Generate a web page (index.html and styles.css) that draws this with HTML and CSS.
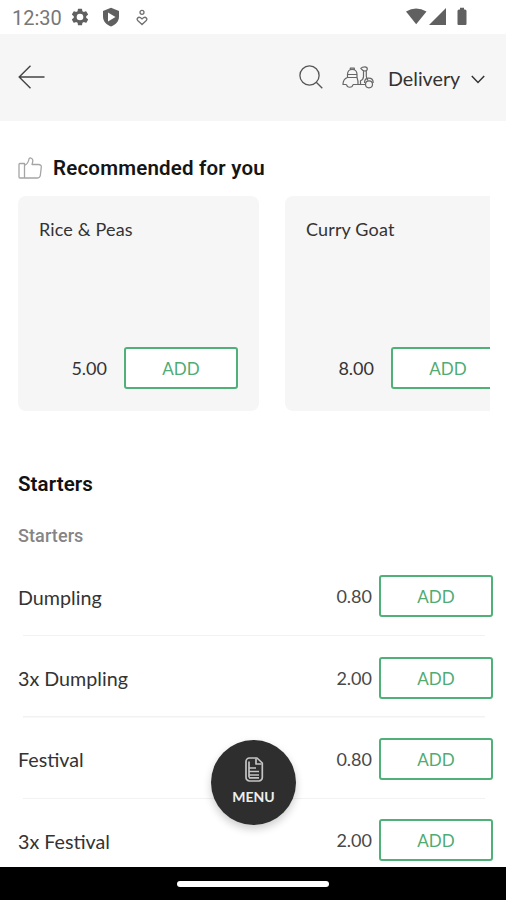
FILE: index.html
```html
<!DOCTYPE html>
<html lang="en">
<head>
<meta charset="utf-8">
<title>Menu</title>
<link rel="stylesheet" href="styles.css">
</head>
<body>
<div class="phone">
  <div class="status">
    <span class="clock">12:30</span>
    <svg class="gear" width="20" height="20" viewBox="0 0 24 24"><path fill="#606060" fill-rule="evenodd" d="M19.4 13a7.500 7.500 0 0 0 0-2l2.100-1.650a.5.5 0 0 0 .12-.64l-2-3.460a.5.5 0 0 0-.6-.22l-2.500 1a7.300 7.300 0 0 0-1.700-.98l-.38-2.650A.5.5 0 0 0 14 2h-4a.5.5 0 0 0-.5.4l-.37 2.650a7.700 7.700 0 0 0-1.700.98l-2.480-1a.5.5 0 0 0-.61.220l-2 3.460a.5.5 0 0 0 .12.640L4.570 11a8 8 0 0 0 0 2l-2.100 1.650a.5.500 0 0 0-.13.640l2 3.460a.5.5 0 0 0 .61.220l2.490-1a7.300 7.300 0 0 0 1.690.98l.38 2.650a.5.500 0 0 0 .49.400h4a.5.500 0 0 0 .49-.4l.38-2.650a7.700 7.700 0 0 0 1.690-.98l2.490 1a.5.500 0 0 0 .61-.22l2-3.460a.5.500 0 0 0-.12-.64zM12 16a4 4 0 1 1 0-8 4 4 0 0 1 0 8z"/></svg>
    <svg class="shield" width="18" height="20" viewBox="0 0 18 20"><path fill="#606060" d="M9 .8 17 4v5.500c0 4.500-3 8.300-8 9.900-5-1.600-8-5.400-8-9.900V4z"/><path fill="#fff" d="M6 5.500 13.500 10 6 14.500z"/></svg>
    <svg class="heart" width="12" height="17" viewBox="0 0 12 17" fill="none" stroke="#707070" stroke-width="1.300"><circle cx="6" cy="3.300" r="2"/><path d="M6 15.500 1.700 11.500C.2 9.700 2.300 7.500 4.300 8.600L6 10l1.700-1.400c2-1.100 4.100 1.100 2.600 2.900z"/></svg>
    <svg class="signals" width="64" height="20" viewBox="0 0 64 20" fill="#606060"><path d="M1 4.500Q11-1.500 21.500 4.500L11.200 17.200z"/><path d="M41 1v17H24z"/><path d="M55 .8h4v1.700h1a1.500 1.500 0 0 1 1.500 1.500v13a1 1 0 0 1-1 1h-7a1 1 0 0 1-1-1V4A1.500 1.500 0 0 1 54 2.500h1z"/></svg>
  </div>
  <header class="bar">
    <svg width="27" height="24" viewBox="0 0 27 24" fill="none" stroke="#444" stroke-width="1.400"><path d="M26.500 12H1.200M12.500.8 1.200 12l11.300 11.200"/></svg>
    <svg class="search" width="24" height="24" viewBox="0 0 24 24" fill="none" stroke="#555" stroke-width="1.300"><circle cx="10.500" cy="10.500" r="9.600"/><path d="m17 17 6.300 6.200"/></svg>
    <svg class="scooter" width="32" height="24" viewBox="0 0 32 24" fill="none" stroke="#666" stroke-width="1.200" stroke-linejoin="round"><path d="M5.500 8.500c0-3.300 1.800-5 4.700-5s4.800 1.700 4.800 5zM8.300 3.500V2.200h4v1.300M5.500 8.500v3h9.500v-3M5.500 11.500C2.500 12.500 1 15 1 18.500h3.500M15 11.500c.8 2 1.300 4.500 1 7h-5"/><path d="M4.500 18.500a3.300 3.300 0 0 0 6.500 0"/><path d="M16 18.500h7.300M18.500 18.500v-3.800c2-.8 3-2 3-4.200V4.800M24.300 4.500v5.500c0 2 .7 3 1.700 4.500M18.800 2.300C20 1 21.300.8 22.800.8c1.500 0 2.500.9 2.500 2.200s-1 2-2.500 2-2.700-.9-4-2.700zM22.500 17c0-3 2-4.800 4.300-4.800 2.700 0 4.400 2 4.400 4.800"/><circle cx="27" cy="18.300" r="3.500"/></svg>
    <span class="mode">Delivery</span>
    <svg class="chev" width="14" height="9" viewBox="0 0 14 9" fill="none" stroke="#333" stroke-width="1.500"><path d="m.8 1 6.200 6.500L13.200 1"/></svg>
  </header>
  <main class="content">
    <h2 class="rec"><svg width="25" height="23" viewBox="0 0 25 23" fill="none" stroke="#a5a5a5" stroke-width="1.300" stroke-linejoin="round"><path d="M6.500 6.500H2A1 1 0 0 0 1 7.500V20a1 1 0 0 0 1 1h4.500zM6.500 8.500C9.500 7 10.500 5 11 2c.3-1.800 3.500-1.200 3.800 1.200.1 1.500-.3 2.800-.8 4.300h6.500c1.900 0 3 1.200 2.800 2.700l-1 8.300c-.3 1.700-1.300 2.500-2.800 2.500H6.500"/></svg>Recommended for you</h2>
    <div class="cards">
      <article class="card"><h3 class="name">Rice &amp; Peas</h3><div class="buy"><span class="price">5.00</span><button class="add">ADD</button></div></article>
      <article class="card"><h3 class="name">Curry Goat</h3><div class="buy"><span class="price">8.00</span><button class="add">ADD</button></div></article>
    </div>
    <h2 class="section">Starters</h2>
    <h3 class="sub">Starters</h3>
    <ul class="list">
      <li class="row"><span class="dish">Dumpling</span><span class="price">0.80</span><button class="add">ADD</button></li>
      <li class="row"><span class="dish">3x Dumpling</span><span class="price">2.00</span><button class="add">ADD</button></li>
      <li class="row"><span class="dish">Festival</span><span class="price">0.80</span><button class="add">ADD</button></li>
      <li class="row"><span class="dish">3x Festival</span><span class="price">2.00</span><button class="add">ADD</button></li>
    </ul>
  </main>
  <nav class="system"><span class="handle"></span></nav>
  <button class="fab"><svg width="20" height="25" viewBox="0 0 20 25" fill="none" stroke="#c4c4c4" stroke-width="1.700" stroke-linejoin="round"><path d="M5.500 1H13l5.300 5v14.500a3.500 3.500 0 0 1-3.500 3.500H5.500A3.500 3.500 0 0 1 2 20.500v-16A3.500 3.500 0 0 1 5.500 1z"/><path d="M12 1.500V7h5.500M5 4.500v16M5 11h7M5 14.500h10M5 18h10M5 20.800h10"/></svg><span class="label">MENU</span></button>
</div>
</body>
</html>
```
FILE: styles.css
```css
* { box-sizing: border-box; }
body { margin: 0; background: #fff; font-family: Lato, sans-serif; color: #333; }
h2, h3, ul { margin: 0; padding: 0; }
button { font-family: inherit; margin: 0; padding: 0; }
svg { display: block; flex: none; }
.phone { position: relative; width: 506px; height: 900px; overflow: hidden; display: flex; flex-direction: column; }
.status { height: 34px; flex: none; display: flex; align-items: center; padding: 0 37px 0 12px; }
.clock { width: 49px; font: 400 20px/34px Roboto, sans-serif; color: #777; padding-top: 2px; }
.gear { margin-left: 9px; }
.shield { margin-left: 12px; }
.heart { margin-left: 16px; }
.signals { margin-left: auto; }
.bar { height: 87px; flex: none; background: #f6f6f6; display: flex; align-items: center; padding: 0 21px 0 18px; }
.search { margin-left: auto; margin-top: -1px; }
.scooter { margin-left: 19px; margin-right: 1px; margin-top: 1px; }
.mode { margin-left: 13px; width: 73px; font-size: 19.700px; line-height: 24px; padding-top: 2px; white-space: nowrap; }
.chev { margin-left: 10px; margin-top: 4px; }
.bar > svg:first-child { margin-top: -1px; }
.content { flex: 1; min-height: 0; overflow: hidden; padding: 35px 14px 0 18px; }
.rec { display: flex; align-items: center; gap: 10px; height: 24px; font: 600 20.500px/24px Roboto, sans-serif; letter-spacing: .2px; color: #151515; white-space: nowrap; }
.cards { display: flex; gap: 26px; margin: 16px 2px 0 0; overflow: hidden; }
.card { flex: none; width: 241px; height: 215px; border-radius: 8px; background: #f6f6f6; padding: 21px 21px 22px; display: flex; flex-direction: column; justify-content: space-between; }
.name { font-weight: 400; font-size: 18px; letter-spacing: .15px; line-height: 24px; }
.buy { display: flex; align-items: center; justify-content: flex-end; gap: 17px; }
.price { font-size: 18px; line-height: 24px; }
.add { width: 114px; height: 42px; flex: none; border: 2px solid #4fb078; border-radius: 3px; background: #fff; color: #50ab74; font-size: 17px; }
.section { margin-top: 61px; font: 600 20.500px/24px Roboto, sans-serif; letter-spacing: .1px; color: #111; }
.sub { margin-top: 29px; font: 500 18px/22px Roboto, sans-serif; letter-spacing: .1px; color: #858585; }
.list { list-style: none; margin: 8px -1px 0 0; }
.row { height: 81.350px; padding-top: 1px; display: flex; align-items: center; background: linear-gradient(#f2f2f2, #f2f2f2) 5px 100% / 462px 1.500px no-repeat; }
.row:last-child { background: none; }
.row .add { padding-top: 1px; }
.dish { flex: 1; font-size: 19.700px; line-height: 24px; padding-top: 3px; }
.row .price { margin-right: 7px; color: #484848; }
.system { height: 33px; flex: none; background: #000; display: flex; justify-content: center; align-items: center; }
.handle { width: 152px; height: 6px; border-radius: 3px; background: #fff; }
.fab { position: absolute; left: 211px; top: 740px; width: 85px; height: 85px; border: 0; border-radius: 50%; background: #2e2e2e; color: #eee; box-shadow: 0 4px 8px rgba(0,0,0,.2); display: flex; flex-direction: column; align-items: center; padding-top: 17px; gap: 6px; }
.label { font-size: 14px; line-height: 18px; font-weight: 700; }
```
